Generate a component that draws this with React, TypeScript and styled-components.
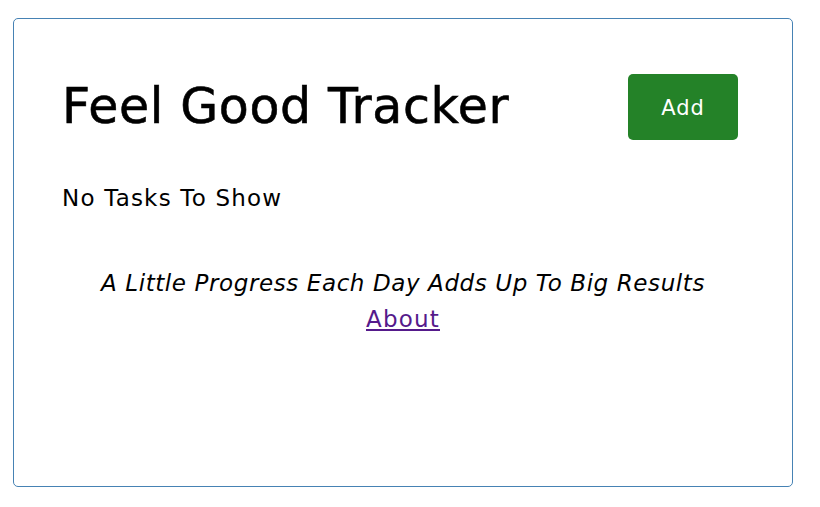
import React from "react";
import styled, { createGlobalStyle } from "styled-components";

const Global = createGlobalStyle`
  html, body { margin: 0; padding: 0; background: #ffffff; }
  body { font-family: "DejaVu Sans", "Open Sans", sans-serif; color: #000; }
`;

const Page = styled.div`
  padding: 18px 27px 20px 13px;
`;

const Card = styled.div`
  box-sizing: border-box;
  width: 780px;
  height: 469px;
  border: 1px solid steelblue;
  border-radius: 5px;
  padding: 55px 48px 30px 48px;
  display: flex;
  flex-direction: column;
`;

const Header = styled.header`
  display: flex;
  align-items: center;
  justify-content: space-between;
  margin-right: 6px;
`;

const Title = styled.h1`
  margin: 0;
  font-size: 49px;
  font-weight: 400;
  line-height: 66px;
  letter-spacing: 0.65px;
  -webkit-text-stroke: 0.6px #000;
`;

const Button = styled.button`
  width: 110px;
  height: 66px;
  padding: 2px 0 0 0;
  border: none;
  border-radius: 5px;
  background: #248228;
  color: #fff;
  font-family: inherit;
  font-size: 21px;
  letter-spacing: 1px;
  cursor: pointer;
`;

const Empty = styled.p`
  margin: 41px 0 0 0;
  font-size: 23px;
  line-height: 34px;
  letter-spacing: 1.2px;
`;

const Footer = styled.footer`
  margin-top: 50px;
  text-align: center;
  font-size: 23px;
  line-height: 36px;
`;

const Quote = styled.p`
  margin: 0;
  font-style: italic;
  letter-spacing: 0.6px;
`;

const Link = styled.a`
  color: #551a8b;
  text-decoration: underline;
  letter-spacing: 1.2px;
`;

export default function App() {
  return (
    <>
      <Global />
      <Page>
        <Card>
          <Header>
            <Title>Feel Good Tracker</Title>
            <Button>Add</Button>
          </Header>
          <Empty>No Tasks To Show</Empty>
          <Footer>
            <Quote>A Little Progress Each Day Adds Up To Big Results</Quote>
            <Link href="#">About</Link>
          </Footer>
        </Card>
      </Page>
    </>
  );
}
